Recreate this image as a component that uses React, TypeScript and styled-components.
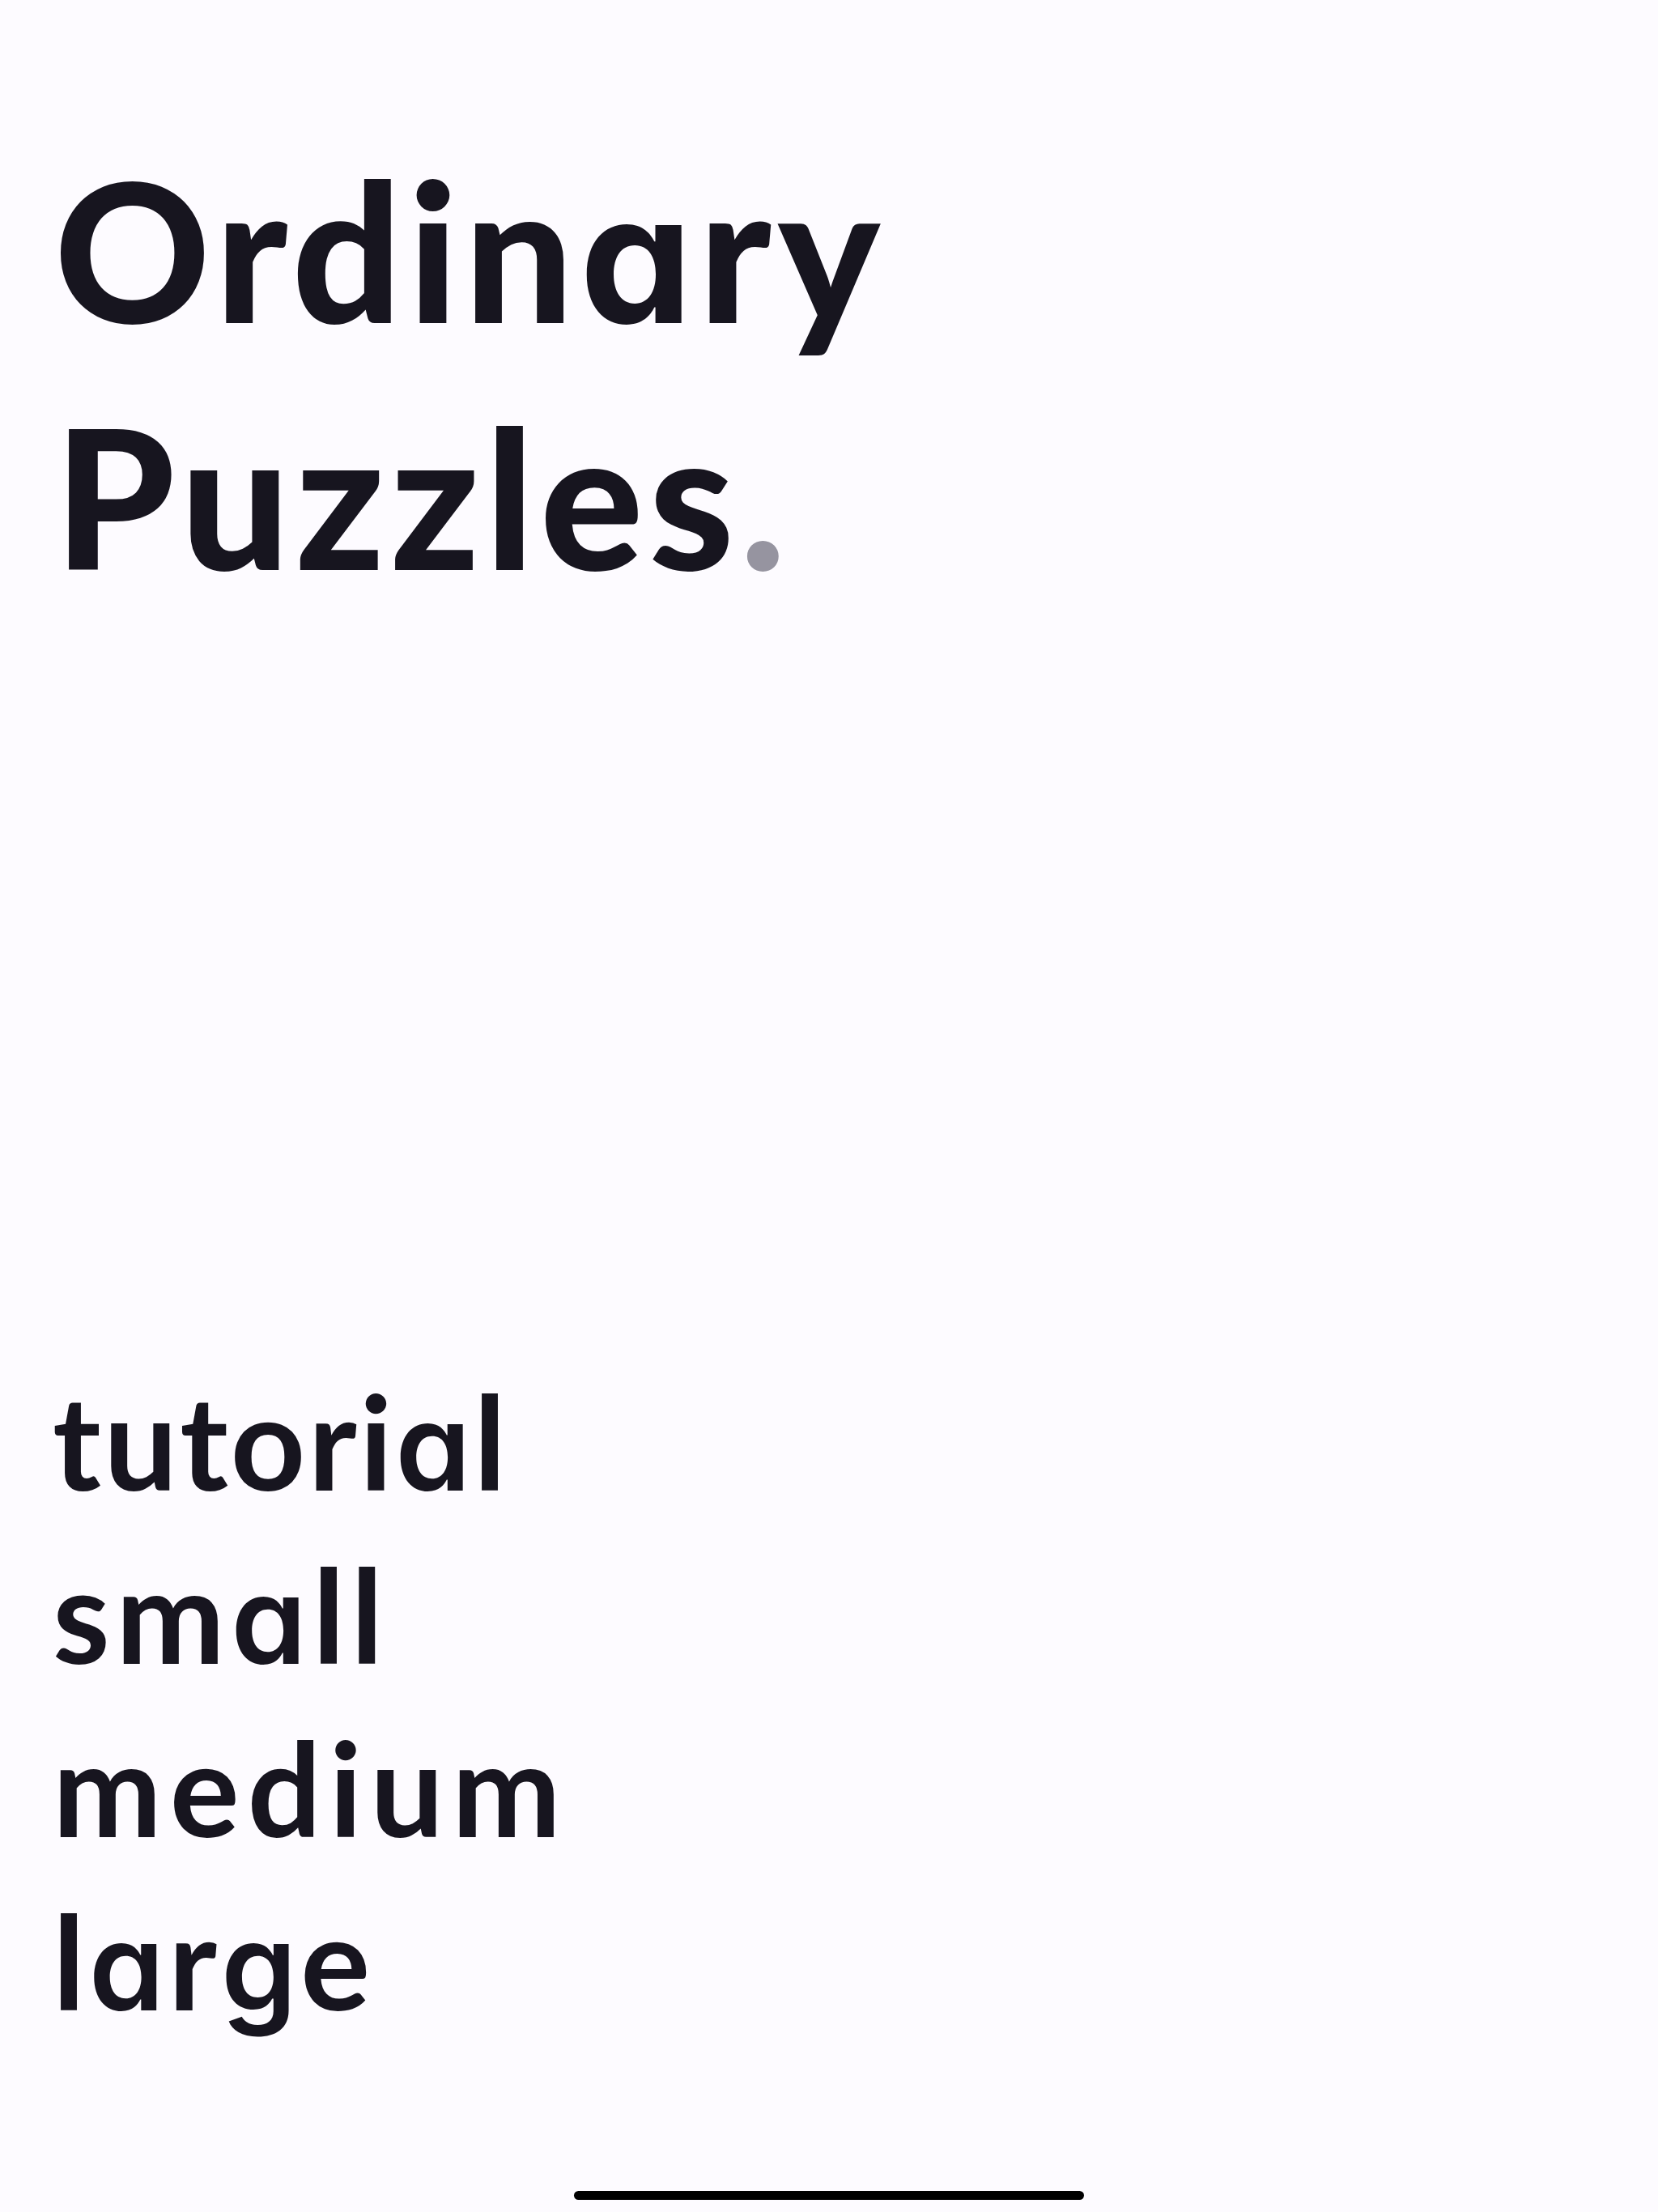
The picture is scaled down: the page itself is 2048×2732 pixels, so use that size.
import React from 'react';
import styled, { createGlobalStyle } from 'styled-components';

const colors = {
  background: '#fdfbff',
  ink: '#17151f',
  muted: '#9694a0',
  black: '#000'
}

const GlobalStyle = createGlobalStyle`
  *, *::before, *::after {
    box-sizing: border-box;
  }
  body {
    margin: 0;
    background-color: ${colors.background};
  }
`

const Screen = styled('main')`
  display: flex;
  flex-direction: column;
  justify-content: space-between;
  width: 100%;
  height: 100vh;
  padding: 155px 64px 15px;
  color: ${colors.ink};
  font-family: Lato, 'Liberation Sans', sans-serif;
`

const Title = styled('h1')`
  margin: 0;
  padding-left: 3px;
  font-size: 238px;
  font-weight: 900;
  line-height: 305px;
`

const TitleLine = styled('span')<{ tracking: number }>`
  display: block;
  letter-spacing: ${props => props.tracking}px;
`

// single-storey a and g, sized to the x-height around them
const Round = styled('span')<{ weight: number }>`
  font-family: Inter, sans-serif;
  font-feature-settings: 'cv11';
  font-size: 0.93em;
  font-weight: ${props => props.weight};
  line-height: 0;
`

const FullStop = styled('span')`
  color: ${colors.muted};
`

const Bottom = styled('div')`
  display: flex;
  flex-direction: column;
  gap: 178px;
`

const Menu = styled('nav')`
  display: flex;
  flex-direction: column;
  align-items: flex-start;
`

const MenuItem = styled('button')<{ tracking: number }>`
  padding: 0 0 0 1px;
  border: 0;
  background: none;
  color: inherit;
  font: inherit;
  font-size: 161px;
  font-weight: 700;
  line-height: 214px;
  letter-spacing: ${props => props.tracking}px;
  cursor: pointer;
`

const HomeIndicator = styled('div')`
  align-self: center;
  width: 630px;
  height: 11px;
  border-radius: 6px;
  background-color: ${colors.black};
`

const menuItems = [
  { label: 'tutorial', tracking: 3.3 },
  { label: 'small', tracking: 7.3 },
  { label: 'medium', tracking: 9.8 },
  { label: 'large', tracking: 4.8 }
]

function Word({ text, weight }: { text: string; weight: number }) {
  return (
    <>
      {text.split(/([ag])/).map((part, i) =>
        i % 2 ? <Round key={i} weight={weight}>{part}</Round> : part
      )}
    </>
  )
}

function App() {
  return (
    <Screen>
      <GlobalStyle />
      <Title>
        <TitleLine tracking={7.6}>
          <Word text="Ordinary" weight={700} />
        </TitleLine>
        <TitleLine tracking={7.1}>
          <Word text="Puzzles" weight={700} />
          <FullStop>.</FullStop>
        </TitleLine>
      </Title>
      <Bottom>
        <Menu>
          {menuItems.map(({ label, tracking }) => (
            <MenuItem key={label} tracking={tracking}>
              <Word text={label} weight={600} />
            </MenuItem>
          ))}
        </Menu>
        <HomeIndicator />
      </Bottom>
    </Screen>
  )
}

export default App;
